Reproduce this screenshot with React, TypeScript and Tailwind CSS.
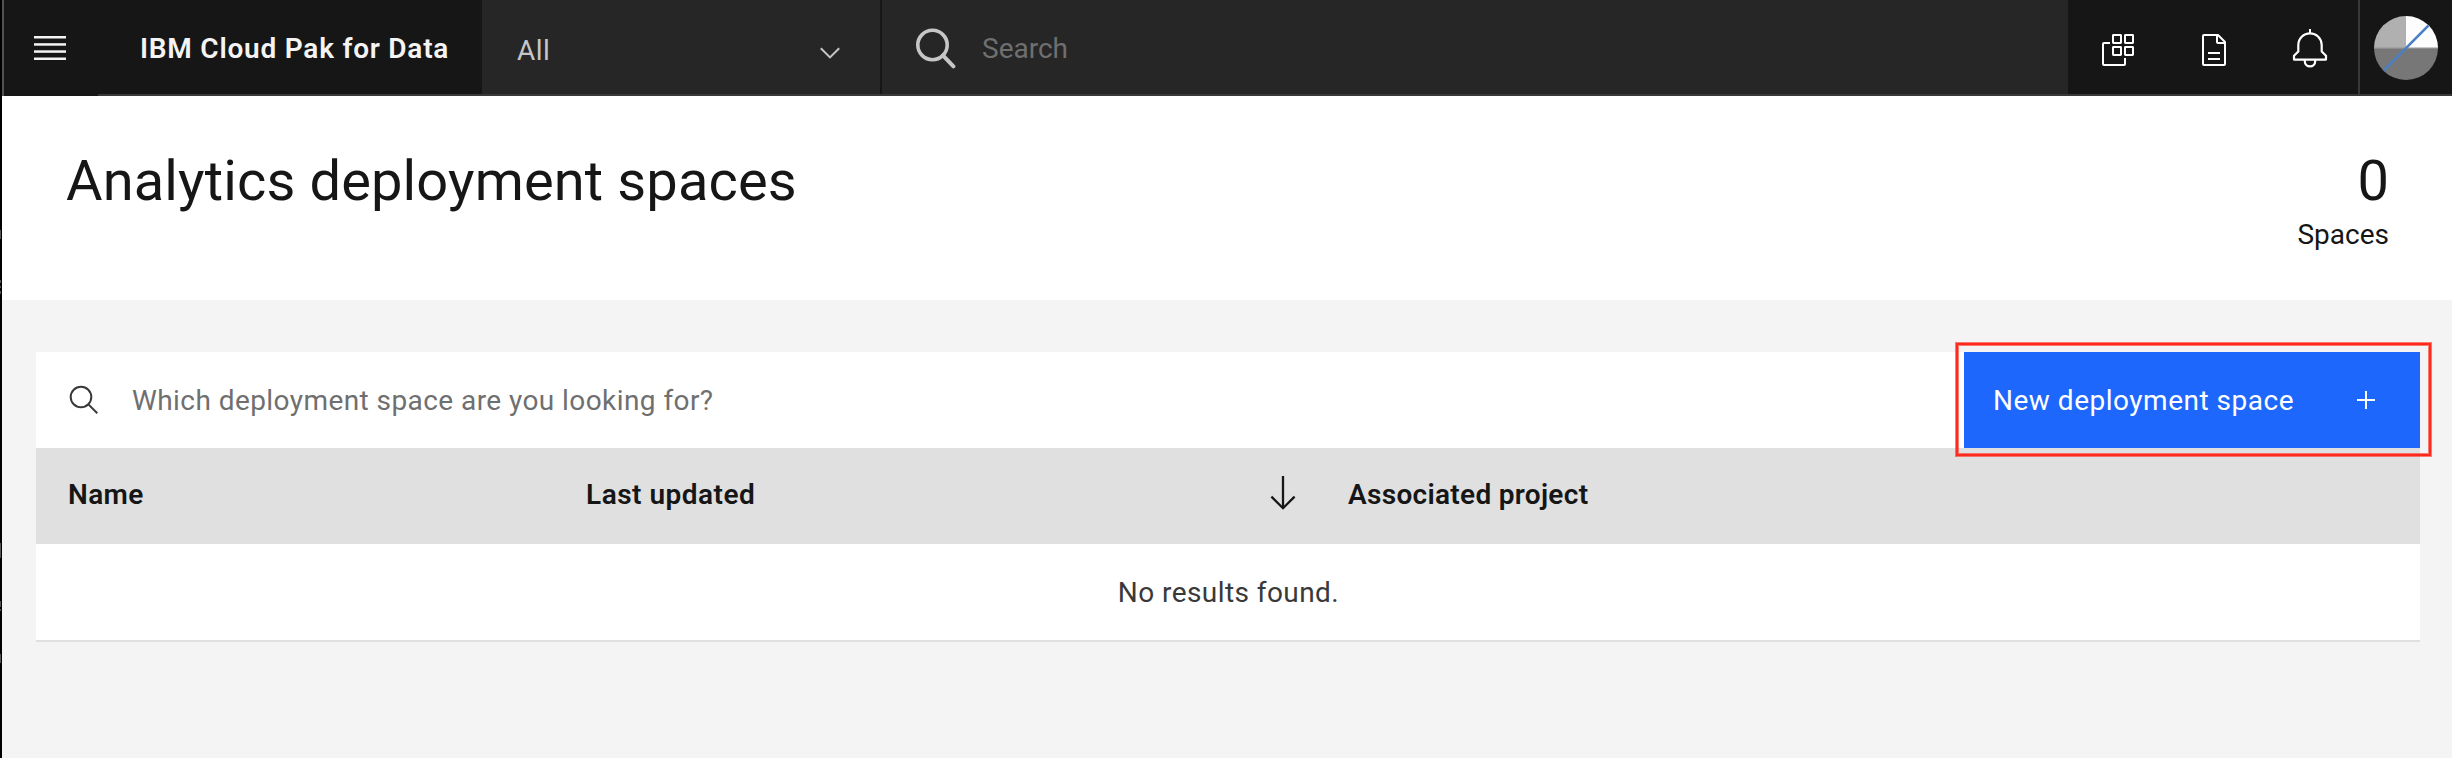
import type { ReactNode } from "react";

function MenuIcon() {
  return (
    <svg width="32" height="24" viewBox="0 0 32 24" fill="#f4f4f4">
      <rect y="0" width="32" height="2.5" />
      <rect y="7.2" width="32" height="2.5" />
      <rect y="14.3" width="32" height="2.5" />
      <rect y="21.5" width="32" height="2.5" />
    </svg>
  );
}

function ChevronIcon() {
  return (
    <svg width="20" height="12" viewBox="0 0 20 12" fill="none" stroke="#c6c6c6" strokeWidth="2">
      <path d="M0.8 1.2 10 10.4 19.2 1.2" />
    </svg>
  );
}

function GlobalSearchIcon() {
  return (
    <svg width="41" height="41" viewBox="0 0 41 41" fill="none" stroke="#c6c6c6" strokeWidth="3.6">
      <circle cx="17.5" cy="17" r="14.7" />
      <path d="M27.9 27.4 38.4 38.4" strokeWidth="4" strokeLinecap="round" />
    </svg>
  );
}

function ServicesIcon() {
  return (
    <svg width="32" height="32" viewBox="0 0 32 32" fill="none" stroke="#fff" strokeWidth="2">
      <rect x="11" y="1" width="8" height="8" rx="0.4" />
      <rect x="23" y="1" width="8" height="8" rx="0.4" />
      <rect x="11" y="13" width="8" height="8" rx="0.4" />
      <rect x="23" y="13" width="8" height="8" rx="0.4" />
      <path d="M8 9H2Q1 9 1 10V30Q1 31 2 31H22Q23 31 23 30V24" />
    </svg>
  );
}

function DocumentIcon() {
  return (
    <svg width="24" height="32" viewBox="0 0 24 32" fill="none" stroke="#fff" strokeWidth="2">
      <path d="M16 1H2Q1 1 1 2V30Q1 31 2 31H22Q23 31 23 30V8Z" strokeLinejoin="round" />
      <path d="M15 1V8Q15 9 16 9H23" />
      <path d="M6 19H18M6 25H18" />
    </svg>
  );
}

function BellIcon() {
  return (
    <svg width="40" height="40" viewBox="0 0 40 40" fill="none" stroke="#fff" strokeWidth="2.2">
      <path d="M20 1V5" strokeWidth="2" />
      <path d="M8.3 23.4V17A11.7 11.7 0 0 1 31.7 17V23.4L36 27.8V31.6H4V27.8Z" strokeLinejoin="round" />
      <path d="M14.8 32V33.2A5.2 5.2 0 0 0 25.2 33.2V32" />
    </svg>
  );
}

function Avatar() {
  return (
    <svg width="64" height="64" viewBox="0 0 64 64">
      <clipPath id="avatar-disc">
        <circle cx="32" cy="32" r="32" />
      </clipPath>
      <g clipPath="url(#avatar-disc)">
        <rect width="32" height="32" fill="#b0b0b0" />
        <rect x="32" width="32" height="32" fill="#fdfdfd" />
        <rect y="32" width="64" height="32" fill="#777" />
        <rect y="31.5" width="64" height="1.3" fill="#949494" />
        <path d="M9.6 54.6 54.6 9.4" stroke="#4a7fc4" strokeWidth="2.6" />
      </g>
    </svg>
  );
}

function TableSearchIcon() {
  return (
    <svg width="30" height="30" viewBox="0 0 30 30" fill="none" stroke="#393939" strokeWidth="2">
      <circle cx="12" cy="12" r="10.3" />
      <path d="M19.4 19.4 28.3 28.3" />
    </svg>
  );
}

function SortArrowIcon() {
  return (
    <svg width="26" height="34" viewBox="0 0 26 34" fill="none" stroke="#161616" strokeWidth="2.3">
      <path d="M13 0V32" />
      <path d="M1.4 20.6 13 32.2 24.6 20.6" />
    </svg>
  );
}

function PlusIcon() {
  return (
    <svg width="18" height="18" viewBox="0 0 18 18" stroke="#fff" strokeWidth="2">
      <path d="M9 0V18M0 9H18" />
    </svg>
  );
}

function HeaderButton({ label, className, children }: { label: string; className: string; children: ReactNode }) {
  return (
    <button aria-label={label} className={`flex h-full shrink-0 items-center ${className}`}>
      {children}
    </button>
  );
}

function Header() {
  return (
    <header className="flex h-24 shrink-0">
      <div className="h-full w-0.5 bg-[#525252]" />
      <HeaderButton label="Menu" className="w-[94px] bg-[#161616] pt-0 pl-[30px]">
        <MenuIcon />
      </HeaderButton>
      <div className="flex min-w-0 grow border-b-2 border-[#393939] bg-[#161616]">
        <div className="flex w-96 shrink-0 items-center pt-[3px] pl-[42px] text-[28px] font-semibold tracking-[0.77px] whitespace-nowrap text-[#f4f4f4]">
          IBM Cloud Pak for Data
        </div>
        <div className="mr-0.5 flex w-[398px] shrink-0 items-center justify-between bg-[#262626] pr-10 pl-[35px] text-[28px] tracking-[0.5px] text-[#c6c6c6]">
          <span className="pt-[7px]">All</span>
          <span className="pt-[11px]">
            <ChevronIcon />
          </span>
        </div>
        <div className="flex grow items-center bg-[#262626] pl-[33px] text-[28px] text-[#6f6f6f]">
          <span className="pt-0.5">
            <GlobalSearchIcon />
          </span>
          <span className="pt-[3px] pl-[26px]">Search</span>
        </div>
        <div className="flex w-[290px] shrink-0">
          <HeaderButton label="Services" className="w-24 pt-1.5 pl-[34px]">
            <ServicesIcon />
          </HeaderButton>
          <HeaderButton label="Documents" className="w-24 pt-1.5 pl-[38px]">
            <DocumentIcon />
          </HeaderButton>
          <HeaderButton label="Notifications" className="w-[98px] pt-0.5 pl-[30px]">
            <BellIcon />
          </HeaderButton>
        </div>
        <HeaderButton label="Account" className="w-[94px] border-l-2 border-[#393939] pt-0.5 pl-3.5">
          <Avatar />
        </HeaderButton>
      </div>
    </header>
  );
}

function PageTitle() {
  return (
    <section className="flex h-[204px] shrink-0 justify-between bg-white pt-[53px] pr-[63px] pl-16 text-[#161616]">
      <h1 className="text-[56px] leading-16 tracking-[0.14px]">Analytics deployment spaces</h1>
      <div className="flex flex-col items-end">
        <span className="text-[56px] leading-16">0</span>
        <span className="mt-1 text-[28px] leading-9">Spaces</span>
      </div>
    </section>
  );
}

function SpacesTable() {
  return (
    <div className="flex flex-col border-b-2 border-[#e0e0e0] bg-white text-[28px]">
      <div className="flex h-24">
        <div className="flex grow items-center pl-[33px]">
          <TableSearchIcon />
          <span className="pt-0.5 pl-[33px] tracking-[0.43px] text-[#6f6f6f]">
            Which deployment space are you looking for?
          </span>
        </div>
        <button className="relative flex w-[456px] items-center justify-between bg-[#1d67fd] pr-[45px] pl-[29px] tracking-[0.51px] text-white">
          <span className="pt-0.5">New deployment space</span>
          <PlusIcon />
          <span className="pointer-events-none absolute -top-2.5 -right-3 -bottom-[9px] -left-[9px] border-4 border-[#ff2a1b]/60" />
          <span className="pointer-events-none absolute -top-[9px] -right-[11px] -bottom-2 -left-2 border-2 border-[#ff2a1b]" />
        </button>
      </div>
      <div className="flex h-24 items-center bg-[#e0e0e0] font-semibold text-[#161616]">
        <div className="w-[518px] pb-[3px] pl-8 tracking-[0.35px]">Name</div>
        <div className="flex w-[762px] items-center justify-between pr-5 pl-8">
          <span className="pb-[3px] tracking-[0.5px]">Last updated</span>
          <span className="pb-1.5">
            <SortArrowIcon />
          </span>
        </div>
        <div className="pb-[3px] pl-8 tracking-[0.3px]">Associated project</div>
      </div>
      <div className="flex h-24 items-center justify-center pt-0.5 pl-px tracking-[0.43px] text-[#393939]">
        No results found.
      </div>
    </div>
  );
}

function WindowEdge() {
  return (
    <div className="flex w-0.5 shrink-0 flex-col items-start bg-black">
      <div className="mt-[230px] h-[9px] w-px bg-[#555]" />
      <div className="mt-[41px] h-[3px] w-px bg-[#555]" />
      <div className="mt-[3px] h-0.5 w-px bg-[#555]" />
      <div className="mt-[3px] h-[3px] w-px bg-[#555]" />
      <div className="mt-[249px] h-[15px] w-px bg-[#555]" />
      <div className="mt-[43px] h-1.5 w-px bg-[#555]" />
      <div className="mt-0.5 h-0.5 w-px bg-[#555]" />
      <div className="mt-[43px] h-[9px] w-px bg-[#555]" />
    </div>
  );
}

export default function App() {
  return (
    <div className="flex h-[758px] w-[2452px] overflow-hidden bg-[#f4f4f4] font-['Roboto',sans-serif]">
      <WindowEdge />
      <div className="flex min-w-0 grow flex-col">
        <Header />
        <PageTitle />
        <main className="grow pt-[52px] pr-8 pl-[34px]">
          <SpacesTable />
        </main>
      </div>
    </div>
  );
}
